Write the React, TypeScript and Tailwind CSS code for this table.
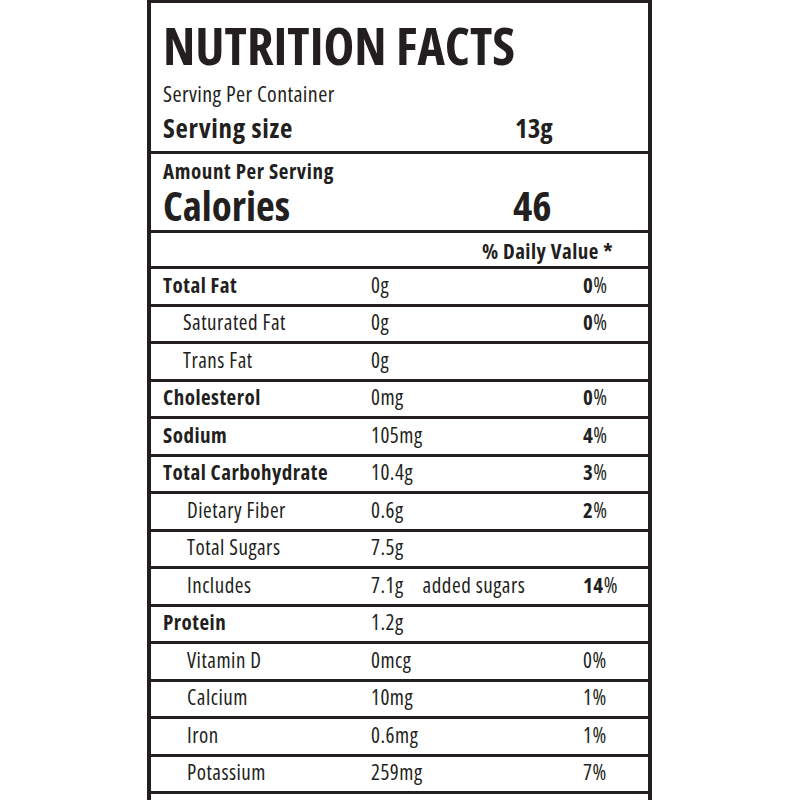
const rows: { name: string; amount: string; extra?: string; pct?: string; pctBold?: boolean; bold?: boolean; indent?: "sm" | "lg" }[] = [
  { name: "Total Fat", amount: "0g", pct: "0", pctBold: true, bold: true },
  { name: "Saturated Fat", amount: "0g", pct: "0", pctBold: true, indent: "sm" },
  { name: "Trans Fat", amount: "0g", indent: "sm" },
  { name: "Cholesterol", amount: "0mg", pct: "0", pctBold: true, bold: true },
  { name: "Sodium", amount: "105mg", pct: "4", pctBold: true, bold: true },
  { name: "Total Carbohydrate", amount: "10.4g", pct: "3", pctBold: true, bold: true },
  { name: "Dietary Fiber", amount: "0.6g", pct: "2", pctBold: true, indent: "lg" },
  { name: "Total Sugars", amount: "7.5g", indent: "lg" },
  { name: "Includes", amount: "7.1g", extra: "added sugars", pct: "14", pctBold: true, indent: "lg" },
  { name: "Protein", amount: "1.2g", bold: true },
  { name: "Vitamin D", amount: "0mcg", pct: "0", indent: "lg" },
  { name: "Calcium", amount: "10mg", pct: "1", indent: "lg" },
  { name: "Iron", amount: "0.6mg", pct: "1", indent: "lg" },
  { name: "Potassium", amount: "259mg", pct: "7", indent: "lg" },
];

const App = () => {
  return (
    <div className="w-[800px] h-[800px] overflow-hidden bg-white text-[#231f20] font-['Open_Sans',sans-serif] font-stretch-[75%]">
      <div className="ml-[147px] w-[505px] h-[840px] border-4 border-b-0 border-[#231f20] border-t-[3px]">
        {/* Header */}
        <div className="h-[151px] pl-3 pt-[16px] border-b-[3px] border-[#231f20]">
          <div className="text-[52px] leading-[52px] font-bold">NUTRITION FACTS</div>
          <div className="text-[22px] leading-[28px] mt-[8px] tracking-[0.4px]">Serving Per Container</div>
          <div className="grid grid-cols-[352px_1fr] mt-[5px] text-[27px] leading-[32px] font-bold">
            <span className="tracking-[0.7px]">Serving size</span>
            <span>13g</span>
          </div>
        </div>

        {/* Calories */}
        <div className="h-[79px] pl-3 pt-[6px] border-b-[3px] border-[#231f20]">
          <div className="text-[21px] leading-[22px] font-bold tracking-[0.6px]">Amount Per Serving</div>
          <div className="grid grid-cols-[350px_1fr] text-[41px] leading-[46px] font-bold">
            <span>Calories</span>
            <span>46</span>
          </div>
        </div>

        {/* Daily value header */}
        <div className="h-[36px] flex items-center justify-end pt-[4px] pr-[35px] border-b-[3px] border-[#231f20] text-[21px] font-bold tracking-[0.5px]">
          % Daily Value *
        </div>

        {/* Nutrient rows */}
        {rows.map((r) => (
          <div
            key={r.name}
            className="h-[37.5px] grid grid-cols-[208px_212px_1fr] items-center pl-3 pb-[2px] border-b-[3px] border-[#231f20] text-[21px] tracking-[0.5px]"
          >
            <span className={`${r.bold ? "font-bold" : ""} ${r.indent === "sm" ? "pl-5" : r.indent === "lg" ? "pl-6" : ""}`}>
              {r.name}
            </span>
            <span className="flex gap-[19px]">
              <span>{r.amount}</span>
              {r.extra && <span>{r.extra}</span>}
            </span>
            <span>
              {r.pct && (
                <>
                  <span className={r.pctBold ? "font-bold" : ""}>{r.pct}</span>%
                </>
              )}
            </span>
          </div>
        ))}
      </div>
    </div>
  );
};

export default App;
